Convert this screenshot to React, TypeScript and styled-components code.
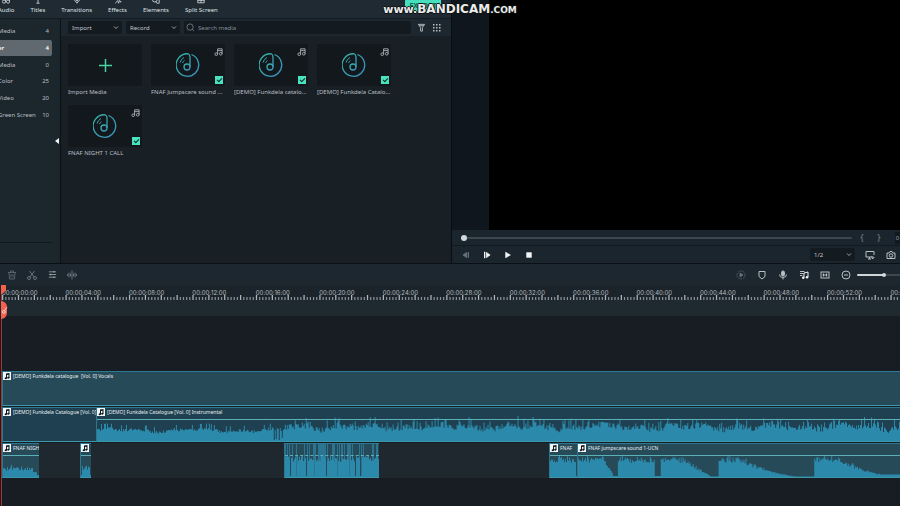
import React from "react";
import styled, { createGlobalStyle, css } from "styled-components";

const Global = createGlobalStyle`
  * { box-sizing: border-box; }
  body { margin: 0; background: #171d23; }
  button, input, select { font: inherit; color: inherit; margin: 0; padding: 0; border: 0; background: none; }
  ul { list-style: none; margin: 0; padding: 0; }
`;

const Page = styled.div`
  position: relative;
  display: grid;
  grid-template-rows: minmax(264px, 52vh) 1fr;
  min-height: 100vh;
  overflow: hidden;
  font-family: "Noto Sans", sans-serif;
  font-size: 6px;
  line-height: 8px;
  color: #b9bfc3;
  background: #171d23;
`;

const Upper = styled.div`
  display: grid;
  grid-template-columns: 452fr 448fr;
  border-bottom: 1px solid #0a1016;
`;

const Library = styled.section`
  display: grid;
  grid-template-rows: 19px 1fr;
  border-right: 1px solid #080e15;
  min-width: 0;
`;

const Header = styled.header`
  display: flex;
  align-items: flex-start;
  overflow: hidden;
  background: #1f2a32;
  border-bottom: 1px solid #141b22;
`;

const Nav = styled.nav`
  display: flex;
  gap: 16px;
  margin: -4px 0 0 -2px;
`;

const NavButton = styled.button`
  display: flex;
  flex-direction: column;
  align-items: center;
  gap: 2px;
  color: #dde1e3;
`;

const ExportButton = styled.button`
  width: 36px;
  height: 12px;
  margin: 0 10px 0 auto;
  border-radius: 0 0 4px 4px;
  background: #45dfbd;
  color: #12664f;
  font-weight: 700;
  font-size: 7px;
  line-height: 10px;
`;

const Browser = styled.div`
  display: grid;
  grid-template-columns: 61px 1fr;
  min-height: 0;
`;

const Sidebar = styled.aside`
  display: grid;
  grid-template-columns: 1fr 8px;
  background: #1b262d;
  border-right: 1px solid #0a1117;
`;

const SidebarMain = styled.div`
  display: flex;
  flex-direction: column;
  padding-bottom: 20px;
`;

const Folders = styled.ul`
  flex: 1;
  display: grid;
  grid-template-rows: repeat(6, 1fr);
  max-height: 104px;
  padding-top: 4px;
`;

const SidebarFoot = styled.div`
  margin-top: auto;
  border-bottom: 1px solid #0f171d;
`;

const Folder = styled.li<{ $active?: boolean }>`
  display: flex;
  justify-content: space-between;
  align-items: center;
  padding: 0 3px 0 0;
  border-radius: 0 2px 2px 0;
  white-space: nowrap;
  ${(p) => p.$active && css`
    background: #5f696f;
    color: #fff;
    font-weight: 600;
  `}
`;

const FolderName = styled.span`
  margin-left: -2px;
`;

const Collapse = styled.button`
  align-self: center;
  justify-self: end;
  width: 6px;
  height: 8px;
  color: #f1f3f4;
  display: grid;
  place-items: center;
`;

const Media = styled.div`
  display: flex;
  flex-direction: column;
  min-width: 0;
  background: #181f25;
`;

const MediaBar = styled.div`
  display: flex;
  align-items: center;
  height: 17px;
  padding: 0 8px 0 7px;
  gap: 4px;
  background: #1d272f;
`;

const SelectBox = styled.label<{ $wide?: number }>`
  position: relative;
  width: ${(p) => p.$wide ?? 54}px;
  height: 13px;
  border-radius: 2px;
  background: #131a20;
  svg { position: absolute; right: 3px; top: 4px; pointer-events: none; }
`;

const Select = styled.select`
  appearance: none;
  width: 100%;
  height: 13px;
  padding-left: 4px;
  color: #c3c9cc;
`;

const Search = styled.label`
  flex: 1;
  display: flex;
  align-items: center;
  gap: 3px;
  height: 13px;
  padding-left: 2px;
  border-radius: 2px;
  background: #131a20;
  color: #8d969c;
`;

const SearchInput = styled.input`
  flex: 1;
  min-width: 0;
  outline: none;
  &::placeholder { color: #868f95; opacity: 1; }
`;

const IconButton = styled.button<{ $dim?: boolean }>`
  display: grid;
  place-items: center;
  width: 12px;
  height: 12px;
  flex: none;
  color: ${(p) => (p.$dim ? "#69737a" : "#b9c0c4")};
`;

const Tiles = styled.div`
  display: grid;
  grid-template-columns: repeat(auto-fill, 74px);
  gap: 9px;
  padding: 8px 7px;
`;

const Card = styled.figure`
  margin: 0;
  white-space: nowrap;
`;

const thumb = css`
  display: grid;
  place-items: center;
  width: 100%;
  height: 42px;
  background: #13181d;
`;

const Thumb = styled.div`
  ${thumb}
  position: relative;
`;

const ImportThumb = styled.button`
  ${thumb}
`;

const Caption = styled.figcaption`
  margin-top: 2px;
`;

const CornerNote = styled.span`
  position: absolute;
  top: 3px;
  right: 2px;
  line-height: 0;
  color: #a9afb3;
`;

const Check = styled.input`
  position: absolute;
  right: 2px;
  bottom: 2px;
  width: 8px;
  height: 8px;
  appearance: none;
  background: #49e3bf;
  &::after {
    content: "";
    position: absolute;
    left: 2px;
    top: 2px;
    width: 4px;
    height: 2px;
    border-left: 1px solid #0c2a27;
    border-bottom: 1px solid #0c2a27;
    transform: rotate(-45deg);
  }
`;

const Preview = styled.section`
  display: grid;
  grid-template-rows: 1fr 16px 17px;
  min-width: 0;
  background: #1b252d;
`;

const Stage = styled.div`
  border-left: 37px solid #10161e;
  background: #000;
`;

const Seek = styled.div`
  display: flex;
  align-items: center;
  padding-left: 9px;
  gap: 3px;
  border-bottom: 1px solid #121a21;
`;

const Range = styled.input<{ $fill: string; $size: number }>`
  appearance: none;
  flex: 1;
  min-width: 0;
  height: 8px;
  &::-webkit-slider-runnable-track {
    height: 2px;
    border-radius: 1px;
    background: ${(p) => p.$fill};
  }
  &::-webkit-slider-thumb {
    appearance: none;
    width: ${(p) => p.$size}px;
    height: ${(p) => p.$size}px;
    margin-top: ${(p) => (2 - p.$size) / 2}px;
    border-radius: 50%;
    background: #d3d9dc;
  }
`;

const Brace = styled.button`
  width: 14px;
  color: #77818a;
  font-size: 9px;
`;

const Stub = styled.button`
  width: 5px;
  height: 12px;
  margin-left: 6px;
  background: #11191f;
  color: #8fa0aa;
`;

const Transport = styled.div`
  display: flex;
  align-items: center;
  justify-content: space-between;
  padding: 0 3px 0 8px;
`;

const Cluster = styled.div<{ $gap: number }>`
  display: flex;
  align-items: center;
  gap: ${(p) => p.$gap}px;
`;

const Timeline = styled.section`
  position: relative;
  display: flex;
  flex-direction: column;
  min-width: 0;
  overflow: hidden;
`;

const EditBar = styled.div`
  display: flex;
  justify-content: space-between;
  height: 21px;
  padding-left: 6px;
  background: #1d272f;
`;

const Zoom = styled.div`
  display: flex;
  width: 51px;
  margin-left: -4px;
  margin-right: -8px;
`;

const Ruler = styled.div`
  height: 15px;
  padding-left: 2px;
  overflow: hidden;
  background: #1b242b;
`;

const Marks = styled.div`
  display: grid;
  grid-template-columns: repeat(15, 1fr);
  width: 106%;
  padding-top: 4px;
  font-family: Inter, sans-serif;
  color: #b4bbbf;
  white-space: nowrap;
`;

const Ticks = styled.svg`
  display: block;
  width: 106%;
  height: 5px;
  margin-top: -2px;
`;

const Strip = styled.div`
  height: 16px;
  background: #1f2930;
`;

const Tracks = styled.div`
  display: grid;
  align-content: start;
  gap: 1px;
  padding: 55px 0 26px 2px;
`;

const Lane = styled.div`
  display: flex;
  height: 35px;
  background: #20282f;
`;

const Clip = styled.div<{ $width?: number; $gap?: number; $dark?: boolean }>`
  position: relative;
  flex: ${(p) => (p.$width ? `0 0 ${p.$width}px` : "1")};
  min-width: 0;
  margin-left: ${(p) => p.$gap ?? 0}px;
  overflow: hidden;
  background: ${(p) => (p.$dark ? "#1f4050" : "#274a59")};
  border: 1px solid #2b7890;
  border-width: 1px 0 1px 1px;
  border-bottom-color: #3c98a8;
`;

const ClipTitle = styled.div`
  position: relative;
  display: flex;
  align-items: center;
  gap: 2px;
  font-size: 5px;
  line-height: 8px;
  white-space: pre;
  color: #e8eef0;
`;

const ClipBadge = styled.span`
  display: grid;
  place-items: center;
  flex: none;
  width: 8px;
  height: 8px;
  background: #f4f6f7;
  color: #10181d;
`;

const Wave = styled.svg`
  position: absolute;
  inset: 0;
  width: 100%;
  height: 100%;
`;

const Level = styled.div<{ $dashed?: boolean }>`
  position: absolute;
  left: 0;
  right: 0;
  top: 11px;
  border-top: 1px ${(p) => (p.$dashed ? "dashed" : "solid")} #5bb0b6;
`;

const Playhead = styled.div`
  position: absolute;
  left: 1px;
  top: 21px;
  bottom: 0;
  width: 1px;
  background: #a0362f;
`;

const Flag = styled.div`
  width: 5px;
  height: 9px;
  background: #f4624f;
  clip-path: polygon(0 0, 100% 0, 100% 60%, 20% 100%, 0 100%);
`;

const CutHandle = styled.button`
  display: grid;
  place-items: center;
  width: 6px;
  height: 18px;
  margin-top: 7px;
  border-radius: 0 6px 6px 0;
  background: #f4624f;
  color: #fff;
`;

const Watermark = styled.div`
  position: absolute;
  top: 2px;
  left: 50%;
  transform: translateX(-50%);
  display: flex;
  align-items: baseline;
  font-family: "DejaVu Sans", sans-serif;
  font-weight: 700;
  line-height: 15px;
  color: #e9ecec;
  text-shadow: 1px 0 #111, -1px 0 #111, 0 1px #111, 0 -1px #111;
  pointer-events: none;
`;
const MarkText = styled.span<{ $size: number }>`
  font-size: ${(p) => p.$size}px;
`;

type IconProps = { size?: number; w?: number; children: React.ReactNode };
const Icon = ({ size = 10, w = 1.5, children }: IconProps) => (
  <svg width={size} height={size} viewBox="0 0 20 20" fill="none" stroke="currentColor" strokeWidth={w} aria-hidden="true">
    {children}
  </svg>
);

const Chevron = () => (
  <svg width="6" height="5" viewBox="0 0 12 10" fill="none" stroke="#aab1b6" strokeWidth="1.8"><path d="M2 3l4 4 4-4" /></svg>
);

const NoteIcon = () => (
  <Icon size={9} w={2}>
    <path d="M8 16V4h10v11M8 8h10" />
    <circle cx="5" cy="16" r="3" />
    <circle cx="15" cy="15" r="3" />
  </Icon>
);

const BadgeNote = () => (
  <svg width="8" height="8" viewBox="0 0 16 16" fill="currentColor" aria-hidden="true">
    <path d="M6 3l7-1v10h-2V5.500L8 6v7H6z" />
    <circle cx="5.500" cy="12.500" r="2.200" />
    <circle cx="10.500" cy="11.500" r="2.200" />
  </svg>
);

const Disc = () => (
  <svg width="24" height="24" viewBox="0 0 48 48" fill="none" stroke="url(#disc)" strokeWidth="2.600">
    <defs>
      <linearGradient id="disc" x1="0" y1="0" x2="1" y2="1">
        <stop offset="0" stopColor="#35b5a4" />
        <stop offset="1" stopColor="#3b8fc0" />
      </linearGradient>
    </defs>
    <path d="M31 3A22.500 22.500 0 1 1 24 1.500Q28 3 28 8V28" />
    <circle cx="22" cy="28" r="6" />
    <path d="M8 19Q10 12 16 9M13 20Q14 17 17 15" strokeWidth="2" />
  </svg>
);

const navItems: [string, React.ReactNode][] = [
  ["Audio", <><circle cx="5" cy="14" r="4" /><circle cx="15" cy="14" r="4" /><path d="M9 14V3h10v11" /></>],
  ["Titles", <path d="M3 3h14M10 3v15M6 18h8" />],
  ["Transitions", <><path d="M2 8l8 10 8-10" /><path d="M6 8l4 5 4-5" /></>],
  ["Effects", <path d="M3 18L13 8M10 4l2 4 5-1-3 4 4 4-5-1-2 4-1-5" />],
  ["Elements", <><circle cx="7" cy="9" r="6" /><path d="M9 14l3 4h6V9h-5" /></>],
  ["Split Screen", <path d="M2 3h16v14H2zM2 11h16M10 11v6" />],
];

const folders: [string, number][] = [["Media", 4], ["er", 4], ["Media", 0], ["Color", 25], ["Video", 20], ["Green Screen", 10]];
const mediaItems = ["FNAF Jumpscare sound ...", "[DEMO] Funkdela catalo...", "[DEMO] Funkdela Catalo...", "FNAF NIGHT 1 CALL"];

const noise = (n: number) => {
  const v = Math.sin(n * 127.1 + 11.7) * 43758.5453;
  return v - Math.floor(v);
};
const ramp = (x: number, a: number, b: number) => Math.max(0, Math.min(1, (x - a) / (b - a)));

const wavePath = (length: number, height: number, level: (x: number) => number) => {
  let d = `M0 ${height}`;
  for (let x = 0; x < length; x++) {
    const y = (height - level(x)).toFixed(1);
    d += `L${x} ${y}L${x + 1} ${y}`;
  }
  return `${d}L${length} ${height}Z`;
};

const song = (x: number) => {
  const n = noise(x);
  const slow = Math.sin(x / 13) + Math.sin(x / 5.3);
  if (x < 177) return 9 + n * 4 + slow + (n > 0.85 ? 3 : 0);
  if (x < 188) return [1, 11, 2, 13, 12, 1, 13, 10, 3, 11, 12][x - 177];
  const spike = noise(x + 900) > 0.84 ? 6 : 0;
  return Math.min(24, 11 + n * 6 + slow * 1.500 + spike) + (x === 421 ? 5 : 0);
};
const call = (x: number) => (x > 33 ? 2 : 6 + noise(x) * 4 + (x === 8 || x === 18 ? 2 : 0) - ramp(x, 28, 34) * 5);
const blip = (x: number) => (x < 1 || x > 8 ? 2 : 6 + noise(x + 3) * 5);
const shortScare = (x: number) => (x > 25 ? 1 : 14 + noise(x + 40) * 7);
const scare = (x: number) => {
  const loud = 14 + noise(x + 70) * 6 + (noise(x + 300) > 0.8 ? 2 : 0);
  if (x < 27) return loud;
  if (x < 40) return x > 34 ? 1 : loud * (1 - ramp(x, 26, 36));
  if (x < 77) return loud;
  if (x < 83) return 1;
  if (x < 141) return Math.max(0.5, loud * (1 - ramp(x, 104, 134)));
  if (x < 237) return Math.max(0.5, loud * Math.pow(1 - ramp(x, 162, 226), 1.700));
  return Math.max(2.5, loud * Math.pow(1 - ramp(x, 262, 325), 1.900));
};
const chopped = (x: number) => ([5, 11, 21, 29, 41, 52, 64, 70, 75, 76].includes(x) ? 1 : 15 + noise(x + 12) * 7);
const streaks = (x: number) => (noise(x + 55) > 0.52 ? 34 : 0);

type WaveProps = { length: number; level: (x: number) => number; under?: (x: number) => number };
const WaveForm = ({ length, level, under }: WaveProps) => (
  <Wave viewBox={`0 0 ${length} 33`} preserveAspectRatio="none">
    {under && <path d={wavePath(length, 33, under)} fill="#2b7593" />}
    <path d={wavePath(length, 33, level)} fill="#2b8aac" />
  </Wave>
);

const Title = ({ children }: { children?: string }) => (
  <ClipTitle>
    <ClipBadge><BadgeNote /></ClipBadge>
    {children}
  </ClipTitle>
);

const timecode = (i: number) => `00:00:${String(i * 4).padStart(2, "0")}:00`;

export default function App() {
  return (
    <Page>
      <Global />
      <Upper>
        <Library>
          <Header>
            <Nav>
              {navItems.map(([label, art]) => (
                <NavButton key={label}><Icon size={8} w={2}>{art}</Icon>{label}</NavButton>
              ))}
            </Nav>
            <ExportButton>EXPORT</ExportButton>
          </Header>
          <Browser>
            <Sidebar>
              <SidebarMain>
                <Folders>
                  {folders.map(([name, count], i) => (
                    <Folder key={i} $active={i === 1}><FolderName>{name}</FolderName><span>{count}</span></Folder>
                  ))}
                </Folders>
                <SidebarFoot />
              </SidebarMain>
              <Collapse aria-label="Collapse folders">
                <svg width="4" height="6" viewBox="0 0 4 6" fill="currentColor"><path d="M4 0v6L0 3z" /></svg>
              </Collapse>
            </Sidebar>
            <Media>
              <MediaBar>
                <SelectBox><Select aria-label="Import"><option>Import</option></Select><Chevron /></SelectBox>
                <SelectBox><Select aria-label="Record"><option>Record</option></Select><Chevron /></SelectBox>
                <Search>
                  <Icon size={9}><circle cx="9" cy="9" r="7" /><path d="M14 14l4 4" /></Icon>
                  <SearchInput aria-label="Search media" placeholder="Search media" />
                </Search>
                <IconButton aria-label="Filter"><Icon size={9} w={2}><path d="M3 3h14l-5 7v8H8v-8zM5 6h10" /></Icon></IconButton>
                <IconButton aria-label="Grid view">
                  <svg width="8" height="8" viewBox="0 0 8 8" fill="currentColor">
                    {[0, 3, 6].map((y) => [0, 3, 6].map((x) => <rect key={`${x}-${y}`} x={x} y={y} width="1.500" height="1.500" />))}
                  </svg>
                </IconButton>
              </MediaBar>
              <Tiles>
                <Card>
                  <ImportThumb aria-label="Import Media">
                    <svg width="14" height="14" viewBox="0 0 14 14" stroke="#45d3a2" strokeWidth="1.500"><path d="M7.500 1v13M1 7.500h13" /></svg>
                  </ImportThumb>
                  <Caption>Import Media</Caption>
                </Card>
                {mediaItems.map((name) => (
                  <Card key={name}>
                    <Thumb>
                      <Disc />
                      <CornerNote><NoteIcon /></CornerNote>
                      <Check type="checkbox" defaultChecked aria-label={name} />
                    </Thumb>
                    <Caption>{name}</Caption>
                  </Card>
                ))}
              </Tiles>
            </Media>
          </Browser>
        </Library>
        <Preview>
          <Stage />
          <Seek>
            <Range type="range" defaultValue={0} aria-label="Position" $fill="#3d474e" $size={6} />
            <Brace aria-label="Mark in">{"{"}</Brace>
            <Brace aria-label="Mark out">{"}"}</Brace>
            <Stub>0</Stub>
          </Seek>
          <Transport>
            <Cluster $gap={9}>
              <IconButton $dim aria-label="Previous frame"><Icon size={8}><path d="M12 3v14L2 10z" fill="currentColor" /><path d="M16 3v14" strokeWidth="3" /></Icon></IconButton>
              <IconButton aria-label="Next frame"><Icon size={8}><path d="M8 3v14l10-7z" fill="#f2f5f6" stroke="#f2f5f6" /><path d="M4 2v16" stroke="#f2f5f6" strokeWidth="3" /></Icon></IconButton>
              <IconButton aria-label="Play"><Icon size={8}><path d="M4 3v14l12-7z" fill="#f2f5f6" stroke="#f2f5f6" /></Icon></IconButton>
              <IconButton aria-label="Stop"><Icon size={8}><path d="M4 4h12v12H4z" fill="#f2f5f6" stroke="#f2f5f6" /></Icon></IconButton>
            </Cluster>
            <Cluster $gap={9}>
              <SelectBox $wide={45}><Select aria-label="Preview quality"><option>1/2</option></Select><Chevron /></SelectBox>
              <IconButton aria-label="Full screen"><Icon w={2}><path d="M12 14H2V3h16v7M6 18h6M9 14v4M13 13l5 2-3 3z" /></Icon></IconButton>
              <IconButton aria-label="Snapshot"><Icon w={2}><path d="M2 6h4l2-3h4l2 3h4v11H2z" /><circle cx="10" cy="11" r="3.500" /></Icon></IconButton>
            </Cluster>
          </Transport>
        </Preview>
      </Upper>
      <Timeline>
        <EditBar>
          <Cluster $gap={8}>
            <IconButton $dim aria-label="Delete"><Icon><path d="M2 5h16M7 5V2h6v3M4 5l1 13h10l1-13M8 8v7M12 8v7" /></Icon></IconButton>
            <IconButton $dim aria-label="Split"><Icon w={2}><circle cx="4" cy="16" r="3" /><circle cx="16" cy="16" r="3" /><path d="M6 14L15 2M14 14L5 2" /></Icon></IconButton>
            <IconButton aria-label="Adjust"><Icon size={9}><path d="M2 4h16M2 10h16M2 16h16M13 2v4M6 8v4M13 14v4" /></Icon></IconButton>
            <IconButton $dim aria-label="Audio stretch"><Icon w={2}><path d="M1 8v4M4 5v10M7 7v6M10 1v18M13 7v6M16 5v10M19 8v4" /></Icon></IconButton>
          </Cluster>
          <Cluster $gap={9}>
            <IconButton $dim aria-label="Render"><Icon><circle cx="10" cy="10" r="8" strokeDasharray="3 2" /><path d="M8 6v8l6-4z" fill="currentColor" /></Icon></IconButton>
            <IconButton aria-label="Marker"><Icon w={2}><path d="M4 3h12v10l-6 5-6-5z" /></Icon></IconButton>
            <IconButton aria-label="Record voiceover"><Icon w={2}><rect x="7" y="2" width="6" height="10" rx="3" fill="currentColor" /><path d="M3 9q0 6 7 6t7-6M10 15v4" /></Icon></IconButton>
            <IconButton aria-label="Audio mixer"><Icon w={2}><path d="M2 3h9M2 7h7M2 11h5" /><path d="M10 15V6l8-2v10" stroke="#f2f5f6" /><circle cx="8.500" cy="15.500" r="2.500" fill="#f2f5f6" stroke="none" /><circle cx="16" cy="14.500" r="2.500" fill="#f2f5f6" stroke="none" /></Icon></IconButton>
            <IconButton aria-label="Fit"><Icon w={2}><rect x="2" y="4" width="16" height="12" /><path d="M5 10h10M7 7v6M13 7v6" /></Icon></IconButton>
            <IconButton aria-label="Zoom out"><Icon w={2}><circle cx="10" cy="10" r="8" /><path d="M6 10h8" /></Icon></IconButton>
            <Zoom><Range type="range" defaultValue={53} aria-label="Zoom" $size={4} $fill="linear-gradient(90deg, #cfd4d7 53%, #3d474e 53%)" /></Zoom>
          </Cluster>
        </EditBar>
        <Ruler>
          <Marks>{Array.from({ length: 15 }, (_, i) => <span key={i}>{timecode(i)}</span>)}</Marks>
          <Ticks viewBox="0 0 1500 5" preserveAspectRatio="none">
            {Array.from({ length: 300 }, (_, i) => (
              <rect key={i} x={i * 5} y={i % 5 ? 2 : 0} width="2" height="5" fill={i % 5 ? "#879096" : "#aeb6ba"} />
            ))}
          </Ticks>
        </Ruler>
        <Strip />
        <Tracks>
          <Lane>
            <Clip><Title>{"[DEMO] Funkdela catalogue  [Vol. 0] Vocals"}</Title></Clip>
          </Lane>
          <Lane>
            <Clip $dark $width={94}><Title>[DEMO] Funkdela Catalogue [Vol. 0] Instrumental</Title></Clip>
            <Clip $dark>
              <WaveForm length={804} level={song} />
              <Level />
              <Title>[DEMO] Funkdela Catalogue [Vol. 0] Instrumental</Title>
            </Clip>
          </Lane>
          <Lane>
            <Clip $width={37}><WaveForm length={36} level={call} /><Level /><Title>FNAF NIGHT 1 CALL</Title></Clip>
            <Clip $width={11} $gap={41}><WaveForm length={10} level={blip} /><Level /><Title /></Clip>
            <Clip $width={95} $gap={193}><WaveForm length={94} level={chopped} under={streaks} /><Level $dashed /></Clip>
            <Clip $width={28} $gap={170}><WaveForm length={27} level={shortScare} /><Level /><Title>FNAF</Title></Clip>
            <Clip><WaveForm length={323} level={scare} /><Level /><Title>FNAF jumpscare sound 1-UCN</Title></Clip>
          </Lane>
        </Tracks>
        <Playhead>
          <Flag />
          <CutHandle aria-label="Split at playhead"><Icon size={7} w={2}><circle cx="8" cy="14" r="4" /><path d="M10 10L17 1" /></Icon></CutHandle>
        </Playhead>
      </Timeline>
      <Watermark>
        <MarkText $size={11}>www.</MarkText>
        <MarkText $size={12}>BANDICAM</MarkText>
        <MarkText $size={9}>.COM</MarkText>
      </Watermark>
    </Page>
  );
}
